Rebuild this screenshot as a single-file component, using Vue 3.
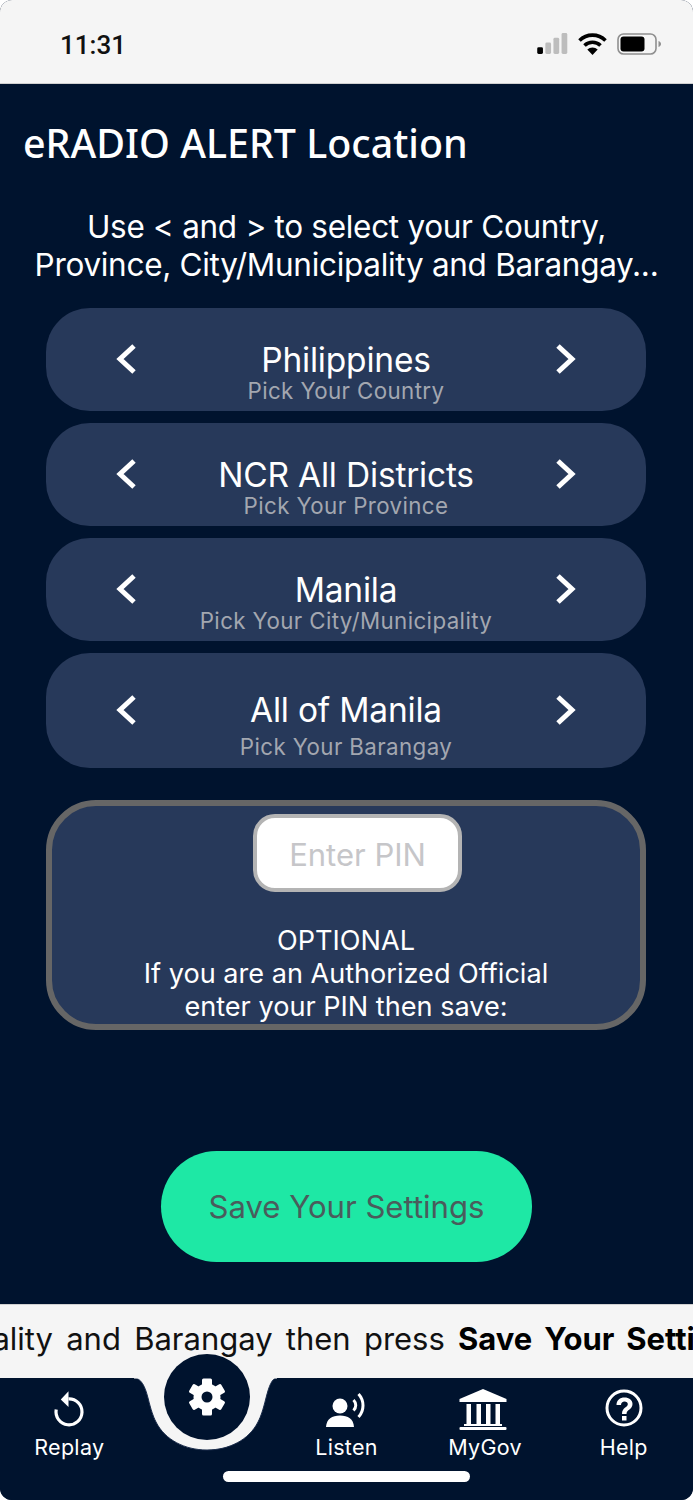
<script setup>
const pickers = [
  { value: 'Philippines', hint: 'Pick Your Country' },
  { value: 'NCR All Districts', hint: 'Pick Your Province' },
  { value: 'Manila', hint: 'Pick Your City/Municipality' },
  { value: 'All of Manila', hint: 'Pick Your Barangay', tall: true },
]
const gearTeeth = [0, 60, 120, 180, 240, 300]
</script>

<template>
  <div class="phone">
    <header class="status">
      <span class="time">11:31</span>
      <div class="status-icons">
        <svg width="31" height="21" viewBox="0 0 32 22">
          <rect x="0" y="15" width="6" height="7" rx="1.5" fill="#000" />
          <rect x="8.5" y="10" width="6" height="12" rx="1.5" fill="#bdbdbd" />
          <rect x="17" y="5" width="6" height="17" rx="1.5" fill="#bdbdbd" />
          <rect x="25.5" y="0" width="6" height="22" rx="1.5" fill="#bdbdbd" />
        </svg>
        <svg class="wifi" width="29" height="22" viewBox="0 0 29 22">
          <path d="M1.5 7.500a18.500 18.500 0 0 1 26 0" fill="none" stroke="#000" stroke-width="3.6" />
          <path d="M6.500 12.500a11.500 11.500 0 0 1 16 0" fill="none" stroke="#000" stroke-width="3.6" />
          <path d="M14.500 22l-5.200-5.400a7.500 7.500 0 0 1 10.400 0z" fill="#000" />
        </svg>
        <svg width="44" height="22" viewBox="0 0 44 22">
          <rect x="1" y="1" width="38" height="20" rx="5.500" fill="none" stroke="#8f8f8f" stroke-width="1.6" />
          <rect x="3.500" y="3.500" width="24" height="15" rx="3" fill="#000" />
          <path d="M41.500 8v6c1.600-.6 2.500-1.700 2.500-3s-.9-2.400-2.500-3z" fill="#8f8f8f" />
        </svg>
      </div>
    </header>

    <main class="main">
      <h1 class="title">eRADIO ALERT Location</h1>
      <p class="intro">Use &lt; and &gt; to select your Country,<br />Province, City/Municipality and Barangay...</p>

      <section class="pickers">
        <div v-for="p in pickers" :key="p.value" class="picker" :class="{ tall: p.tall }">
          <svg class="chev" width="22" height="32" viewBox="0 0 22 32">
            <path d="M19 3 5 16l14 13" fill="none" stroke="#fff" stroke-width="5" />
          </svg>
          <div class="picker-text">
            <div class="picker-value">{{ p.value }}</div>
            <div class="picker-hint">{{ p.hint }}</div>
          </div>
          <svg class="chev" width="22" height="32" viewBox="0 0 22 32">
            <path d="M3 3l14 13L3 29" fill="none" stroke="#fff" stroke-width="5" />
          </svg>
        </div>
      </section>

      <section class="pin-box">
        <div class="pin-input">Enter PIN</div>
        <p class="pin-text">OPTIONAL<br />If you are an Authorized Official<br />enter your PIN then save:</p>
      </section>

      <button class="save">Save Your Settings</button>
    </main>

    <div class="ticker">
      <div class="ticker-text">City/Municipality and Barangay then press <b>Save Your Settings</b></div>
    </div>

    <nav class="tabs">
      <svg class="notch" width="160" height="74" viewBox="0 0 160 74">
        <path d="M7 0C14 0 18 8 21 20C24 32 26 38 29 44C38 62 58 72 80 72C102 72 122 62 131 44C134 38 136 32 139 20C142 8 145 0 150 0" fill="#f5f5f5" stroke="#1b2d4c" stroke-width="1" />
        <rect x="7" y="-2" width="143" height="2.500" fill="#f5f5f5" />
      </svg>
      <div class="gear-btn">
        <svg width="40" height="40" viewBox="-20 -20 40 40">
          <g fill="#fff">
            <rect v-for="a in gearTeeth" :key="a" x="-5" y="-18.500" width="10" height="10" rx="1.500" :transform="`rotate(${a})`" />
            <circle r="13.500" />
          </g>
          <circle r="5.500" fill="#00132e" />
        </svg>
      </div>

      <div class="tab">
        <svg width="60" height="44" viewBox="39 1384 60 44">
          <path d="M68.500 1396.800A13 13 0 1 1 56.200 1407.500" fill="none" stroke="#fff" stroke-width="3.200" />
          <path d="M68.500 1389.300V1405L60.800 1397.500z" fill="#fff" />
        </svg>
        <span>Replay</span>
      </div>
      <div class="tab"></div>
      <div class="tab">
        <svg width="60" height="44" viewBox="316 1384 60 44">
          <circle cx="340" cy="1404" r="7.500" fill="#fff" />
          <path d="M326 1425C326.500 1417 332 1413.500 340 1413.500C348 1413.500 353.500 1417 354 1425z" fill="#fff" />
          <path d="M353.500 1398C356.500 1401 356.500 1405.500 353.500 1408.500" fill="none" stroke="#fff" stroke-width="3" />
          <path d="M358.500 1392C364.500 1398.500 364.500 1408.500 358.500 1415" fill="none" stroke="#fff" stroke-width="3" />
        </svg>
        <span>Listen</span>
      </div>
      <div class="tab">
        <svg width="60" height="44" viewBox="455 1384 60 44">
          <path d="M483 1387 506.500 1397V1400H459.500V1397z" fill="#fff" />
          <rect x="466.500" y="1402" width="4.500" height="20" fill="#fff" />
          <rect x="476.500" y="1402" width="4.500" height="20" fill="#fff" />
          <rect x="486" y="1402" width="4.500" height="20" fill="#fff" />
          <rect x="495.500" y="1402" width="4.500" height="20" fill="#fff" />
          <rect x="464" y="1422" width="38" height="2" fill="#fff" />
          <rect x="459.500" y="1425" width="47" height="3" rx="1" fill="#fff" />
        </svg>
        <span>MyGov</span>
      </div>
      <div class="tab">
        <svg width="60" height="44" viewBox="593 1386 60 44">
          <circle cx="623" cy="1408" r="17" fill="none" stroke="#fff" stroke-width="3" />
          <path d="M615.500 1405C615.500 1400 619 1397.500 623.500 1397.500C628 1397.500 631.500 1400 631.500 1404C631.500 1409.500 625.500 1409.500 625.500 1414H621C621 1407.500 626.800 1407.500 626.800 1404.300C626.800 1402.500 625.500 1401.500 623.500 1401.500C621.500 1401.500 620 1402.800 620 1405z" fill="#fff" />
          <rect x="621" y="1416" width="4.500" height="4.500" fill="#fff" />
        </svg>
        <span>Help</span>
      </div>

      <div class="home-bar"></div>
    </nav>
  </div>
</template>

<style>
html, body { margin: 0; background: #fff; }
</style>

<style scoped>
.phone {
  width: 693px;
  height: 1500px;
  border-radius: 12px;
  overflow: hidden;
  display: flex;
  flex-direction: column;
  font-family: Inter, "Liberation Sans", sans-serif;
  background: #00132e;
}
.status {
  height: 84px;
  box-sizing: border-box;
  background: #f5f5f5;
  border-bottom: 1px solid #d0d0d0;
  display: flex;
  align-items: center;
  justify-content: space-between;
  padding: 4px 32px 0 60px;
  flex: none;
}
.time { font: 500 26px Roboto, sans-serif; color: #111; padding-top: 2px; }
.status-icons { display: flex; align-items: center; gap: 10px; }

.main {
  flex: 1;
  display: flex;
  flex-direction: column;
  align-items: center;
  background: #00132e;
  min-height: 0;
}
.title {
  align-self: flex-start;
  margin: 35px 0 0 23px;
  font: 500 39.4px/48px "Noto Sans", sans-serif;
  color: #fff;
}
.intro {
  margin: 41px 0 0;
  text-align: center;
  font-size: 31.500px;
  font-weight: 400;
  line-height: 38px;
  color: #fff;
  font-family: Inter, sans-serif;
  letter-spacing: -0.3px;
}
.pickers {
  margin: 24px 1px 0 0;
  display: flex;
  flex-direction: column;
  gap: 12px;
  width: 600px;
}
.picker {
  height: 103px;
  border-radius: 44px;
  background: #27395a;
  display: flex;
  align-items: flex-start;
  justify-content: space-between;
  padding: 0 69px;
  box-sizing: border-box;
}
.picker.tall { height: 115px; }
.chev { margin-top: 35px; flex: none; }
.picker.tall .chev { margin-top: 41px; }
.picker-text { text-align: center; padding-top: 33px; }
.picker.tall .picker-text { padding-top: 38px; }
.picker-value { font-size: 33.500px; line-height: 38px; color: #fff; letter-spacing: -0.2px; }
.picker-hint { font-size: 22.300px; line-height: 18px; color: #a3a7b0; letter-spacing: 0.4px; margin-top: 3px; }
.picker.tall .picker-hint { margin-top: 9px; }

.pin-box {
  margin: 32px 1px 0 0;
  width: 600px;
  height: 230px;
  box-sizing: border-box;
  border: 6px solid #666;
  border-radius: 50px;
  background: #27395a;
  display: flex;
  flex-direction: column;
  align-items: center;
  overflow: hidden;
}
.pin-input {
  margin: 8px 0 0 23px;
  width: 209px;
  height: 78px;
  box-sizing: border-box;
  border: 4px solid #b4b4b4;
  border-radius: 22px;
  background: #fff;
  display: flex;
  align-items: center;
  justify-content: center;
  padding-top: 3px;
  font-size: 31px;
  color: #c6c6c9;
}
.pin-text {
  margin: 32px 0 0;
  text-align: center;
  font-size: 27.100px;
  line-height: 33px;
  color: #fff;
}
.save {
  margin-top: 121px;
  width: 371px;
  height: 111px;
  border: 0;
  border-radius: 56px;
  background: #1ee8a5;
  color: #4a5c5c;
  font: 400 31.100px Inter, sans-serif;
}
.ticker {
  flex: none;
  height: 74px;
  background: #f5f5f5;
  border-top: 1px solid #d0d0d0;
  overflow: hidden;
  white-space: nowrap;
  padding-top: 14px;
  box-sizing: border-box;
}
.ticker-text {
  display: inline-block;
  font-size: 31px;
  line-height: 40px;
  word-spacing: 4.500px;
  color: #111;
  transform: translateX(-192px);
}
.ticker-text b { font-weight: 700; color: #000; }

.tabs {
  flex: none;
  position: relative;
  height: 122px;
  display: grid;
  grid-template-columns: repeat(5, 1fr);
  background: #00132e;
}
.notch { position: absolute; left: 127px; top: 0; overflow: visible; }
.gear-btn {
  position: absolute;
  left: 163.500px;
  top: -24px;
  width: 86px;
  height: 86px;
  border-radius: 50%;
  background: #00132e;
  display: flex;
  align-items: center;
  justify-content: center;
}
.tab {
  display: flex;
  flex-direction: column;
  align-items: center;
  justify-content: flex-start;
  padding-top: 8px;
  color: #fff;
  font-size: 21.500px;
}
.tab svg { flex: none; }
.tab span { margin-top: 5px; line-height: 24px; letter-spacing: 0.3px; }
.home-bar {
  position: absolute;
  left: 223px;
  top: 93px;
  width: 247px;
  height: 11px;
  border-radius: 6px;
  background: #fff;
}
</style>
